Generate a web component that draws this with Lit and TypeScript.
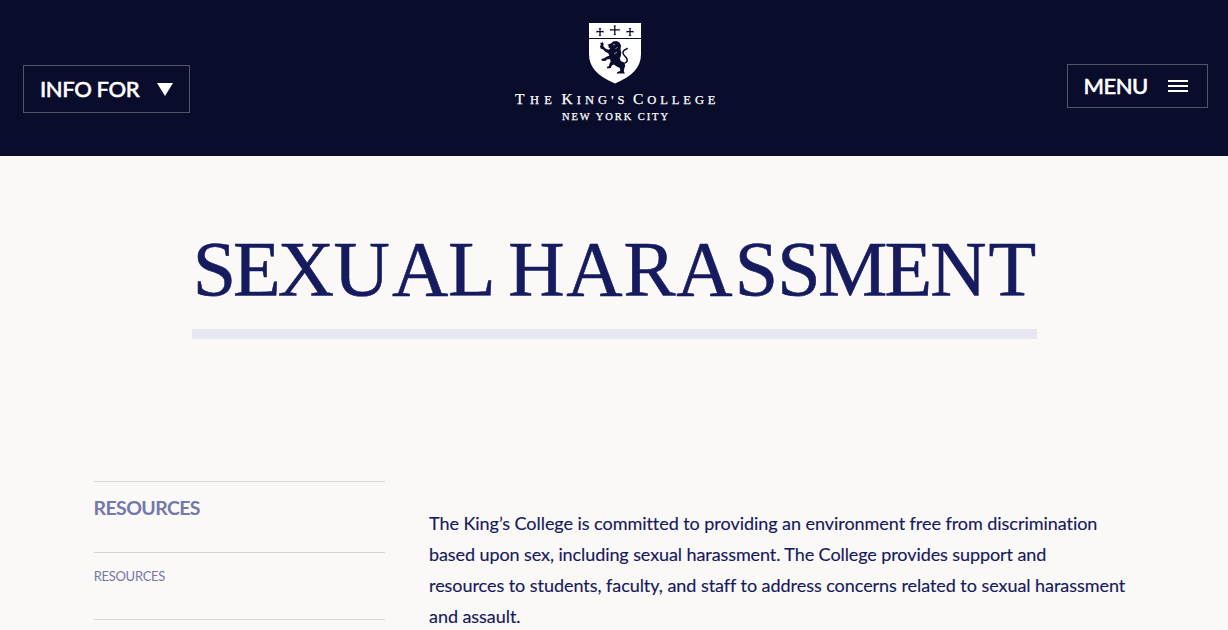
import { LitElement, html, css, svg } from "lit";
import { customElement } from "lit/decorators.js";

const TITLE = "SEXUAL HARASSMENT";
// Hand-kerned glyph origins for the display title.
const TITLE_X = [0.7, 41, 85.7, 141.4, 199.9, 255.9, 299, 316.3, 374.2, 431.6, 484.2, 542.7, 585.2, 626, 692.6, 738.2, 796.6];

@customElement("college-logo")
export class CollegeLogo extends LitElement {
  static styles = css`
    :host { display: block; }
    svg { display: block; }
    text { font-family: "Liberation Serif", serif; fill: #fff; stroke: #fff; stroke-width: .25px; }
  `;
  render() {
    const cross = (x: number, y: number, w: number, h: number) => svg`
      <path d="M${x} ${y}v${h}M${x - w / 2} ${y + h * 0.45}h${w}" stroke="#090c2b" stroke-width="1.3"/>
      <path d="M${x - 1.3} ${y + 0.4}h2.6M${x - 1.3} ${y + h - 0.4}h2.6M${x - w / 2} ${y + h * 0.45 - 1}v2M${x + w / 2} ${y + h * 0.45 - 1}v2" stroke="#090c2b" stroke-width=".6"/>`;
    return html`<svg width="204" height="102" viewBox="513 22 204 102" role="img" aria-label="The King's College">
      <path fill="#fff" d="M589 23h52v31c0 13-8 22-26 29.500c-18-7.500-26-16.500-26-29.500z"/>
      <path d="M589 38.500h52" stroke="#090c2b" stroke-width="1"/>
      ${cross(600, 28, 6.5, 8)}${cross(614.8, 25.5, 9, 9.5)}${cross(630, 28, 6.5, 8)}
      <path fill="#090c2b" d="M611 43.500l2-2 3.500-.5 3 1.500 1.500 3-.5 4 .8 3-.5 3.500-1 2.500 1 2.500 3 1.500 1.500 3-1 3-.5 2.500 1 2.500h-8l.5-1.500 3-1-.5-3-3-1.500-3-2-2 1-1 2.500-3.500.5-.5-1.500 2-.8 1-3.200 1-1.500-1-2.500-3 .5-1.500 1.500-3.500-.3-.5-1.700 3-.7 2-1.500 3-1-1-2.500-3-1.500-2.500-2.500-2-.5-1-3 1.300-.5-1-2.500 1.500.2.8-1.200 1.200 2-.3 2.500 2.500 2.500 3 1 1.500-1.500-2-1 .5-1.500-1.500-1z"/>
      <path fill="none" stroke="#fff" stroke-width=".6" d="M613 44.500l2 .3M615.500 49l2-2M614 54l3-2"/>
      <path fill="none" stroke="#090c2b" stroke-width="1.500" d="M621 63c4 1 7-1 6-4s-5-4-4-7 3-2 4.500-4"/>
      <text x="515" y="104.200" font-size="15.500" textLength="37"><tspan>T</tspan><tspan font-size="12.500">HE</tspan></text>
      <text x="561.500" y="104.200" font-size="15.500" textLength="63"><tspan>K</tspan><tspan font-size="12.500">ING'S</tspan></text>
      <text x="633" y="104.200" font-size="15.500" textLength="82.500"><tspan>C</tspan><tspan font-size="12.500">OLLEGE</tspan></text>
      <text x="562" y="120" font-size="10.500" textLength="106">NEW YORK CITY</text>
    </svg>`;
  }
}

@customElement("app-root")
export class AppRoot extends LitElement {
  static styles = css`
    :host { display: block; height: 630px; overflow: hidden; background: #fbf9f7; color: #161a5e; font-family: Lato, sans-serif; }
    * { box-sizing: border-box; }
    .header { height: 156px; background: #090c2b; display: grid; grid-template-columns: 1fr 204px 1fr; align-items: start; padding: 22px 20px 0 23px; }
    .btn { display: flex; align-items: center; border: 1px solid #53556b; background: none; color: #fff; font: 500 22px/28px Lato, sans-serif; padding: 0 16px; white-space: nowrap; -webkit-text-stroke: .5px #fff; }
    .info { width: 167px; height: 48px; margin-top: 43px; justify-content: space-between; letter-spacing: -.4px; }
    .menu { width: 141px; height: 44px; margin-top: 42px; justify-self: end; padding: 0 19px 0 15.500px; justify-content: space-between; letter-spacing: -.5px; }
    .icon { display: block; }
    .logo { margin-left: -1px; }
    .title { margin: 0 191px 0 192px; height: 183px; border-bottom: 10px solid #e6e7f0; }
    .title svg { display: block; overflow: visible; }
    .title text { font: 400 78px "Liberation Serif", serif; fill: #161a5e; stroke: #161a5e; stroke-width: .6px; }
    .main { display: grid; grid-template-columns: 291px 700px; column-gap: 44px; padding: 142px 0 0 94px; }
    .item { border-top: 1px solid #d7d6d6; color: #7478aa; }
    .head { height: 71px; font-weight: 700; font-size: 19.500px; line-height: 24px; padding-top: 14px; letter-spacing: -.6px; text-indent: -.5px; }
    .link { height: 67px; font-size: 13px; line-height: 16px; padding-top: 15px; letter-spacing: -.3px; text-indent: -.3px; }
    .copy { margin: 27px 0 0; font-size: 18px; line-height: 31px; white-space: nowrap; letter-spacing: -.05px; -webkit-text-stroke: .15px #161a5e; }
    .line { display: block; width: max-content; }
    .snug { letter-spacing: -.09px; }
  `;
  render() {
    return html`
      <header class="header">
        <button class="btn info"><span>INFO FOR</span><svg class="icon" width="16" height="13"><path d="M0 0h16L8 13z" fill="#fff"/></svg></button>
        <college-logo class="logo"></college-logo>
        <button class="btn menu"><span>MENU</span><svg class="icon" width="20" height="12"><path d="M0 1h20M0 6h20M0 11h20" stroke="#fff" stroke-width="2"/></svg></button>
      </header>
      <h1 class="title"><svg width="845" height="173"><text y="138.900" x=${TITLE_X.join(" ")}>${TITLE}</text></svg></h1>
      <main class="main">
        <nav>
          <div class="item head">RESOURCES</div>
          <div class="item link">RESOURCES</div>
          <div class="item"></div>
        </nav>
        <p class="copy">
          <span class="line">The King’s College is committed to providing an environment free from discrimination</span>
          <span class="line snug">based upon sex, including sexual harassment. The College provides support and</span>
          <span class="line">resources to students, faculty, and staff to address concerns related to sexual harassment</span>
          <span class="line">and assault.</span>
        </p>
      </main>`;
  }
}
